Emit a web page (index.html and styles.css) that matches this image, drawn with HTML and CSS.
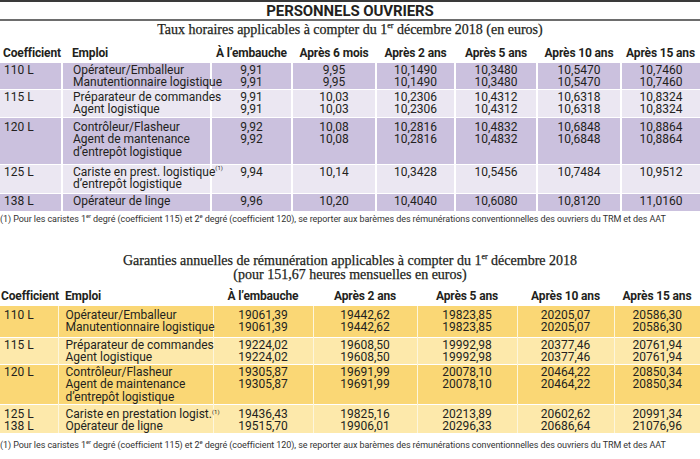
FILE: index.html
```html
<!DOCTYPE html>
<html lang="fr">
<head>
<meta charset="utf-8">
<title>Personnels ouvriers</title>
<link rel="stylesheet" href="styles.css">
</head>
<body>
<div class="page">
  <h1 class="title">PERSONNELS OUVRIERS</h1>
  <h2 class="subtitle s1">Taux horaires applicables à compter du 1<sup>er</sup> décembre 2018 (en euros)</h2>
  <table class="grid t1">
    <colgroup>
      <col class="c-coef1"><col class="c-emp1"><col class="c-a1"><col class="c-b1"><col class="c-c1"><col class="c-d1"><col class="c-e1"><col class="c-f1">
    </colgroup>
    <thead>
      <tr class="head"><th class="coef">Coefficient</th><th class="emp">Emploi</th><th>À l’embauche</th><th>Après 6 mois</th><th>Après 2 ans</th><th>Après 5 ans</th><th>Après 10 ans</th><th>Après 15 ans</th></tr>
    </thead>
    <tbody>
      <tr class="dark r1"><td class="coef">110 L</td><td class="emp">Opérateur/Emballeur<br>Manutentionnaire logistique</td><td>9,91<br>9,91</td><td>9,95<br>9,95</td><td>10,1490<br>10,1490</td><td>10,3480<br>10,3480</td><td>10,5470<br>10,5470</td><td>10,7460<br>10,7460</td></tr>
      <tr class="light r2"><td class="coef">115 L</td><td class="emp">Préparateur de commandes<br>Agent logistique</td><td>9,91<br>9,91</td><td>10,03<br>10,03</td><td>10,2306<br>10,2306</td><td>10,4312<br>10,4312</td><td>10,6318<br>10,6318</td><td>10,8324<br>10,8324</td></tr>
      <tr class="dark r3"><td class="coef">120 L</td><td class="emp">Contrôleur/Flasheur<br>Agent de mantenance<br>d’entrepôt logistique</td><td>9,92<br>9,92</td><td>10,08<br>10,08</td><td>10,2816<br>10,2816</td><td>10,4832<br>10,4832</td><td>10,6848<br>10,6848</td><td>10,8864<br>10,8864</td></tr>
      <tr class="light r4"><td class="coef">125 L</td><td class="emp">Cariste en prest. logistique<sup class="note">(1)</sup><br>d’entrepôt logistique</td><td>9,94</td><td>10,14</td><td>10,3428</td><td>10,5456</td><td>10,7484</td><td>10,9512</td></tr>
      <tr class="dark r5"><td class="coef">138 L</td><td class="emp">Opérateur de linge</td><td>9,96</td><td>10,20</td><td>10,4040</td><td>10,6080</td><td>10,8120</td><td>11,0160</td></tr>
    </tbody>
  </table>
  <p class="footnote f1">(1) Pour les caristes 1<sup>er</sup> degré (coefficient 115) et 2<sup>e</sup> degré (coefficient 120), se reporter aux barèmes des rémunérations conventionnelles des ouvriers du TRM et des AAT</p>

  <h2 class="subtitle s2"><span class="line">Garanties annuelles de rémunération applicables à compter du 1<sup>er</sup> décembre 2018</span><span class="line">(pour 151,67 heures mensuelles en euros)</span></h2>
  <table class="grid t2">
    <colgroup>
      <col class="c-coef2"><col class="c-emp2"><col class="c-a2"><col class="c-b2"><col class="c-c2"><col class="c-d2"><col class="c-e2">
    </colgroup>
    <thead>
      <tr class="head"><th class="coef">Coefficient</th><th class="emp">Emploi</th><th>À l’embauche</th><th>Après 2 ans</th><th>Après 5 ans</th><th>Après 10 ans</th><th>Après 15 ans</th></tr>
    </thead>
    <tbody>
      <tr class="dark q1"><td class="coef">110 L</td><td class="emp">Opérateur/Emballeur<br>Manutentionnaire logistique</td><td>19061,39<br>19061,39</td><td>19442,62<br>19442,62</td><td>19823,85<br>19823,85</td><td>20205,07<br>20205,07</td><td>20586,30<br>20586,30</td></tr>
      <tr class="light q2"><td class="coef">115 L</td><td class="emp">Préparateur de commandes<br>Agent logistique</td><td>19224,02<br>19224,02</td><td>19608,50<br>19608,50</td><td>19992,98<br>19992,98</td><td>20377,46<br>20377,46</td><td>20761,94<br>20761,94</td></tr>
      <tr class="dark q3"><td class="coef">120 L</td><td class="emp">Contrôleur/Flasheur<br>Agent de maintenance<br>d’entrepôt logistique</td><td>19305,87<br>19305,87</td><td>19691,99<br>19691,99</td><td>20078,10<br>20078,10</td><td>20464,22<br>20464,22</td><td>20850,34<br>20850,34</td></tr>
      <tr class="light q4"><td class="coef">125 L<br>138 L</td><td class="emp">Cariste en prestation logist.<sup class="note2">(1)</sup><br>Opérateur de ligne</td><td>19436,43<br>19515,70</td><td>19825,16<br>19906,01</td><td>20213,89<br>20296,33</td><td>20602,62<br>20686,64</td><td>20991,34<br>21076,96</td></tr>
    </tbody>
  </table>
  <p class="footnote f2">(1) Pour les caristes 1<sup>er</sup> degré (coefficient 115) et 2<sup>e</sup> degré (coefficient 120), se reporter aux barèmes des rémunérations conventionnelles des ouvriers du TRM et des AAT</p>
</div>
</body>
</html>
```
FILE: styles.css
```css
html, body {
  margin: 0;
  padding: 0;
  background: #ffffff;
}
.page {
  width: 700px;
  color: #231f20;
  font-family: Roboto, "Liberation Sans", sans-serif;
}
.title {
  margin: 0;
  border-top: 2px solid #3a3a3a;
  border-bottom: 2px solid #6d6d6d;
  height: 17px;
  line-height: 18px;
  font-size: 15px;
  font-weight: 700;
  text-align: center;
  letter-spacing: -0.1px;
}
.subtitle {
  margin: 0;
  font-family: "Liberation Serif", serif;
  font-weight: 400;
  font-size: 14px;
  text-align: center;
  color: #231f20;
  -webkit-text-stroke: 0.25px #231f20;
}
.subtitle sup {
  font-size: 8px;
  line-height: 0;
}
.s1 {
  height: 22px;
  line-height: 18px;
}
.s2 {
  margin-top: 28px;
  height: 33px;
}
.s2 .line {
  display: block;
  height: 14px;
  line-height: 14px;
}
.grid {
  width: 700px;
  border-collapse: collapse;
  table-layout: fixed;
  font-size: 12px;
  line-height: 12.5px;
}
.grid th, .grid td {
  padding: 0;
  text-align: center;
  vertical-align: top;
  white-space: nowrap;
}
.grid th {
  font-weight: 700;
  font-size: 12px;
  vertical-align: bottom;
  padding-bottom: 2px;
  letter-spacing: -0.15px;
}
.grid .coef { text-align: left; }
.grid .emp { text-align: left; }
.t1 .head { height: 19px; }
.t1 td {
  border-top: 1px solid #ffffff;
  border-left: 2px solid #ffffff;
  padding-top: 1px;
}
.t1 td.coef { border-left: 0; padding-left: 4px; }
.t1 th.coef { padding-left: 3px; }
.t1 .emp { padding-left: 10px; }
.t1 .dark td { background: #cbc1de; }
.t1 .light td { background: #ebe7f2; }
.t1 .r1 { height: 27px; }
.t1 .r2 { height: 28px; }
.t1 .r3 { height: 47px; }
.t1 .r3 td { padding-top: 3px; }
.t1 .r4 { height: 29px; }
.t1 .r5 { height: 18px; }
.c-coef1 { width: 62px; }
.c-emp1 { width: 149px; }
.c-a1 { width: 81px; }
.c-b1 { width: 84px; }
.c-c1 { width: 79px; }
.c-d1 { width: 82px; }
.c-e1 { width: 84px; }
.c-f1 { width: 79px; }
.note {
  font-size: 6px;
  line-height: 0;
  vertical-align: 6px;
}
.note2 {
  font-size: 6px;
  line-height: 0;
  vertical-align: 4px;
}
.footnote {
  margin: 0;
  font-size: 9px;
  line-height: 14px;
  color: #333333;
  white-space: nowrap;
  letter-spacing: -0.07px;
}
.footnote sup {
  font-size: 6px;
  line-height: 0;
}
.t2 .head { height: 18px; }
.t2 td {
  border-top: 1px solid #ffffff;
  border-left: 1px solid #fdf6dc;
  padding-top: 3px;
}
.t2 td.coef { border-left: 0; padding-left: 4px; }
.t2 th.coef { padding-left: 1px; }
.t2 .emp { padding-left: 7px; }
.t2 .dark td { background: #fad775; }
.t2 .light td { background: #fde9ab; }
.t2 .q1 { height: 32px; }
.t2 .q2 { height: 27px; }
.t2 .q2 td { padding-top: 1px; }
.t2 .q3 { height: 40px; }
.t2 .q3 td { padding-top: 1px; }
.t2 .q4 { height: 28px; }
.t2 .q4 td { padding-top: 3px; }
.c-coef2 { width: 58px; }
.c-emp2 { width: 155px; }
.c-a2 { width: 100px; }
.c-b2 { width: 104px; }
.c-c2 { width: 100px; }
.c-d2 { width: 97px; }
.c-e2 { width: 86px; }
.f1 { height: 14px; padding-top: 1px; }
.f2 { margin-top: 5px; }
```
